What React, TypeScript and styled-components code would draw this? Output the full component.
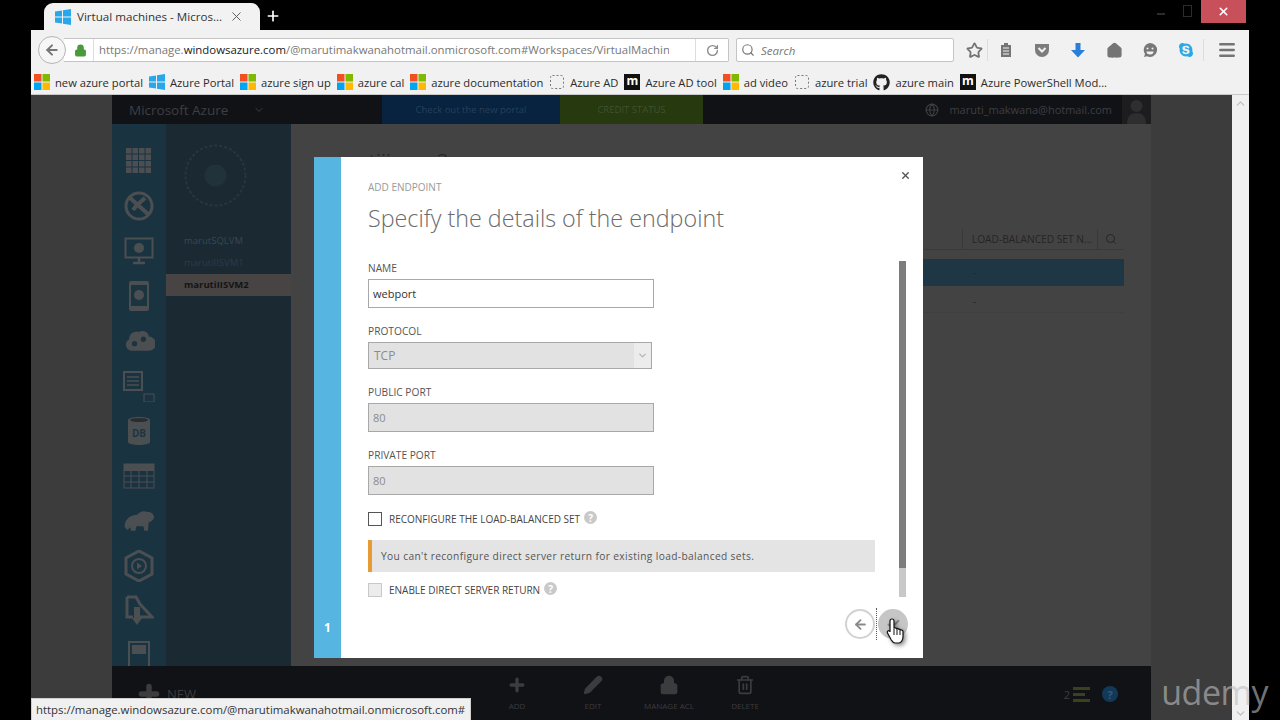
import React from 'react';
import styled, { createGlobalStyle } from 'styled-components';
import { ArrowLeft, Check, ChevronDown, ChevronUp, RotateCw, Search, Star, Home, Menu, X, Plus, Globe, Lock, Trash2, Pencil } from 'lucide-react';
import { FaGithub, FaSkype } from 'react-icons/fa';

const GlobalStyle = createGlobalStyle`
  html, body {
    margin: 0;
    padding: 0;
    background: #000;
    overflow: hidden;
  }
  * { box-sizing: border-box; }
`;

const Screen = styled.div`
  position: relative;
  width: 1280px;
  height: 720px;
  background: #000;
  overflow: hidden;
  font-family: 'Open Sans', 'Noto Sans', sans-serif;
`;

const TitleBar = styled.div`
  height: 30px;
  padding: 3px 31px 0 44px;
  display: flex;
  align-items: flex-start;
`;

const Tab = styled.div`
  width: 216px;
  height: 27px;
  background: #f2f2f2;
  border-radius: 9px 9px 0 0;
  display: flex;
  align-items: center;
  padding: 0 16px 0 11px;
  font-size: 11.6px;
  color: #333;
  gap: 6px;
  svg {
    flex-shrink: 0;
  }
`;

const TabTitle = styled.span`
  flex: 1;
  white-space: nowrap;
`;

const NewTab = styled.div`
  margin: 5px 0 0 5px;
  color: #fff;
  display: flex;
`;

const WindowControls = styled.div`
  margin-left: auto;
  margin-right: 3px;
  margin-top: -3px;
  display: flex;
  align-items: flex-start;
  gap: 18px;
`;

const CloseButton = styled.div`
  width: 45px;
  height: 23px;
  margin-left: -9px;
  background: #c7505a;
  color: #fff;
  display: flex;
  align-items: center;
  justify-content: center;
`;

const RestoreIcon = styled.div`
  width: 9px;
  height: 12px;
  margin-top: 5px;
  border: 1px solid #2c2c2c;
`;

const MinimizeIcon = styled.div`
  width: 8px;
  height: 2px;
  margin-top: 13px;
  background: #2c2c2c;
`;

const BrowserWindow = styled.div`
  margin: 0 31px;
  height: 690px;
  display: flex;
  flex-direction: column;
`;

const NavBar = styled.div`
  height: 40px;
  background: #f1f1f1;
  display: flex;
  align-items: center;
  flex-shrink: 0;
`;

const BackButton = styled.div`
  width: 28px;
  height: 28px;
  margin-left: 7px;
  border-radius: 50%;
  background: #f6f6f6;
  border: 1px solid #b5b5b5;
  color: #777;
  display: flex;
  align-items: center;
  justify-content: center;
  flex-shrink: 0;
  z-index: 1;
`;

const UrlBox = styled.div`
  width: 665px;
  height: 24px;
  margin-left: -2px;
  background: #fff;
  border: 1px solid #c4c4c4;
  border-left: none;
  border-radius: 0 2px 2px 0;
  display: flex;
  align-items: center;
  padding-left: 10px;
  font-size: 11.4px;
  color: #777;
  white-space: nowrap;
  overflow: hidden;
  flex-shrink: 0;
`;

const UrlText = styled.div`
  width: 576px;
  margin-left: 6px;
  padding-left: 5px;
  border-left: 1px solid #ddd;
  overflow: hidden;
  line-height: 22px;
  flex-shrink: 0;
`;

const UrlHost = styled.span`
  color: #1a1a1a;
`;

const Reload = styled.div`
  margin-left: 26px;
  height: 100%;
  width: 33px;
  border-left: 1px solid #ddd;
  color: #8a8a8a;
  display: flex;
  align-items: center;
  justify-content: center;
  flex-shrink: 0;
`;

const SearchBox = styled.div`
  width: 218px;
  height: 24px;
  margin-left: 7px;
  background: #fff;
  border: 1px solid #c4c4c4;
  border-radius: 2px;
  display: flex;
  align-items: center;
  gap: 6px;
  padding-left: 4px;
  font-size: 11.5px;
  font-style: italic;
  color: #777;
  flex-shrink: 0;
`;

const ToolIcons = styled.div`
  margin-left: 7px;
  display: flex;
  align-items: center;
  color: #747474;
  flex: 1;
`;

const ToolSlot = styled.div<{ $w: number; $sep?: boolean }>`
  width: ${(p) => p.$w}px;
  height: 22px;
  display: flex;
  align-items: center;
  justify-content: center;
  border-right: ${(p) => (p.$sep ? '1px solid #ddd' : 'none')};
`;

const BookmarkBar = styled.div`
  height: 25px;
  background: #f1f1f1;
  border-bottom: 1px solid #c9c9c9;
  display: flex;
  align-items: center;
  padding-left: 3px;
  font-size: 11.2px;
  color: #2b2b2b;
  flex-shrink: 0;
  white-space: nowrap;
`;

const Bookmark = styled.div`
  display: flex;
  align-items: center;
  gap: 5px;
  margin-right: 6px;
`;

const Viewport = styled.div`
  position: relative;
  flex: 1;
  display: flex;
  background: #3c3c3c;
  overflow: hidden;
`;

const Page = styled.div`
  flex: 1;
  padding: 0 0 0 81px;
  display: flex;
`;

const Scrollbar = styled.div`
  width: 17px;
  background: #f0f0f0;
  color: #bbb;
  display: flex;
  flex-direction: column;
  justify-content: space-between;
  align-items: center;
  padding: 2px 0 0;
`;

const Portal = styled.div`
  width: 1039px;
  display: flex;
  flex-direction: column;
`;

const PortalTop = styled.div`
  height: 29px;
  background: #111216;
  display: flex;
  align-items: stretch;
  flex-shrink: 0;
`;

const PortalBrand = styled.div`
  width: 270px;
  display: flex;
  align-items: center;
  padding-left: 17px;
  font-size: 13.5px;
  color: #3d3f42;
  gap: 25px;
`;

const Banner = styled.div<{ $bg: string; $w: number }>`
  width: ${(p) => p.$w}px;
  background: ${(p) => p.$bg};
  color: rgba(255, 255, 255, 0.14);
  font-size: 9.5px;
  display: flex;
  align-items: center;
  justify-content: center;
`;

const UserInfo = styled.div`
  margin-left: auto;
  display: flex;
  align-items: center;
  color: #3e3f42;
  font-size: 11px;
  gap: 10px;
`;

const Avatar = styled.div`
  width: 29px;
  height: 29px;
  background: #1d1d1f;
  display: flex;
  align-items: flex-end;
  justify-content: center;
  color: #333;
`;

const PortalBody = styled.div`
  flex: 1;
  display: flex;
  min-height: 0;
`;

const IconRail = styled.div`
  width: 54px;
  background: #1a3340;
  display: flex;
  flex-direction: column;
  align-items: center;
  gap: 11px;
  padding-top: 20px;
  color: #4c4f52;
  overflow: hidden;
`;

const RailIcon = styled.div`
  width: 32px;
  height: 34px;
  flex-shrink: 0;
  display: flex;
  align-items: center;
  justify-content: center;
`;

const Sidebar = styled.div`
  width: 125px;
  background: #1a2932;
  padding-top: 19px;
  display: flex;
  flex-direction: column;
  font-size: 9.5px;
  color: #384852;
`;

const SideRing = styled.svg`
  margin: 0 0 22px 17px;
  flex-shrink: 0;
`;

const SideItem = styled.div<{ $active?: boolean; $dim?: boolean }>`
  height: 22px;
  line-height: 22px;
  padding-left: 18px;
  background: ${(p) => (p.$active ? '#494444' : 'transparent')};
  color: ${(p) => (p.$active ? '#141414' : p.$dim ? '#2c3c46' : '#384852')};
  font-weight: ${(p) => (p.$active ? 700 : 400)};
`;

const Content = styled.div`
  flex: 1;
  display: flex;
  flex-direction: column;
  background: #434343;
  padding: 24px 27px 0 25px;
  color: #252525;
  font-size: 10.2px;
`;

const PageTitle = styled.div`
  height: 26px;
  line-height: 26px;
  font-size: 22px;
  font-weight: 300;
  color: #222;
`;

const TableHead = styled.div`
  height: 22px;
  margin-top: 54px;
  margin-bottom: 9px;
  display: flex;
  justify-content: flex-end;
  align-items: center;
  border-bottom: 1px solid #3a3a3a;
`;

const HeadCell = styled.div`
  height: 20px;
  line-height: 20px;
  padding: 0 5px 0 9px;
  border-left: 1px solid #383838;
`;

const HeadSearch = styled.div`
  width: 27px;
  height: 20px;
  border-left: 1px solid #383838;
  display: flex;
  align-items: center;
  justify-content: center;
`;

const SelectedRow = styled.div`
  height: 27px;
  padding-left: 657px;
  line-height: 27px;
  background: #1f3745;
`;

const RowDash = styled.div`
  height: 27px;
  line-height: 30px;
  padding-left: 657px;
  border-bottom: 1px solid #3f3f3f;
`;

const CommandBar = styled.div`
  position: absolute;
  left: 81px;
  bottom: 0;
  width: 1039px;
  height: 54px;
  background: #111216;
  color: #3c3c3e;
  font-size: 8px;
  display: flex;
  padding: 9px 0 0 385px;
  gap: 36px;
`;

const Command = styled.div`
  width: 40px;
  display: flex;
  flex-direction: column;
  align-items: center;
  gap: 5px;
  white-space: nowrap;
`;

const NewButton = styled.div`
  position: absolute;
  left: 24px;
  top: 15px;
  display: flex;
  align-items: center;
  gap: 5px;
  font-size: 13px;
  line-height: 14px;
`;

const CommandTray = styled.div`
  position: absolute;
  right: 33px;
  top: 20px;
  display: flex;
  align-items: center;
  gap: 12px;
  font-size: 11px;
`;

const TrayBars = styled.div`
  display: flex;
  flex-direction: column;
  gap: 3px;
  margin-left: -9px;
`;

const TrayBar = styled.div<{ $w: number }>`
  width: ${(p) => p.$w}px;
  height: 3px;
  background: #39421f;
`;

const HelpDot = styled.div`
  width: 16px;
  height: 16px;
  border-radius: 50%;
  background: #123a58;
  color: #33587a;
  font-weight: 700;
  display: flex;
  align-items: center;
  justify-content: center;
`;

/* dialog sits over the dimmed portal */
const Dialog = styled.div`
  position: absolute;
  left: 283px;
  top: 62px;
  width: 609px;
  height: 501px;
  background: #fff;
  display: flex;
  color: #555;
`;

const StepRail = styled.div`
  width: 27px;
  background: #57b5e1;
  color: #fff;
  font-size: 12px;
  font-weight: 700;
  display: flex;
  align-items: flex-end;
  justify-content: center;
  padding-bottom: 22px;
`;

const DialogBody = styled.div`
  position: relative;
  flex: 1;
  padding: 23px 0 0 27px;
`;

const Eyebrow = styled.div`
  font-size: 10px;
  line-height: 14px;
  color: #999;
`;

const Heading = styled.h1`
  margin: 8px 0 0;
  font-size: 23.3px;
  line-height: 32px;
  font-weight: 300;
  color: #6b6b6b;
`;

const Form = styled.div`
  margin-top: 27px;
  width: 507px;
`;

const Field = styled.div`
  margin-bottom: 16px;
`;

const Label = styled.div`
  font-size: 10.2px;
  line-height: 14px;
  margin-bottom: 4px;
  color: #555;
`;

const TextInput = styled.div<{ $disabled?: boolean }>`
  width: 286px;
  height: 29px;
  padding-left: 4px;
  display: flex;
  align-items: center;
  font-size: 11px;
  border: 1px solid #a8a8a8;
  background: ${(p) => (p.$disabled ? '#e2e2e2' : '#fff')};
  color: ${(p) => (p.$disabled ? '#8c8c8c' : '#333')};
`;

const SelectBox = styled.div`
  width: 284px;
  height: 27px;
  padding-left: 5px;
  display: flex;
  align-items: center;
  justify-content: space-between;
  font-size: 12px;
  background: #e2e2e2;
  border: 1px solid #a8a8a8;
  color: #8c8c8c;
`;

const SelectArrow = styled.div`
  width: 17px;
  height: 100%;
  background: #ececec;
  color: #b5b5b5;
  display: flex;
  align-items: center;
  justify-content: center;
`;

const CheckRow = styled.div`
  display: flex;
  align-items: center;
  font-size: 10px;
  height: 16px;
  color: #444;
`;

const CheckBox = styled.div<{ $disabled?: boolean }>`
  width: 14px;
  height: 14px;
  margin-right: 7px;
  border: 1px solid ${(p) => (p.$disabled ? '#c8c8c8' : '#555')};
  background: ${(p) => (p.$disabled ? '#ececec' : '#fff')};
`;

const HintIcon = styled.div`
  width: 13px;
  height: 13px;
  margin: -3px 0 0 4px;
  border-radius: 50%;
  background: #c9c9c9;
  color: #fff;
  font-size: 10px;
  font-weight: 700;
  display: flex;
  align-items: center;
  justify-content: center;
`;

const Notice = styled.div`
  width: 507px;
  height: 32px;
  margin: 13px 0 10px;
  padding-left: 9px;
  display: flex;
  align-items: center;
  font-size: 10.2px;
  letter-spacing: 0.37px;
  white-space: nowrap;
  background: #e4e4e4;
  border-left: 4px solid #e89b35;
  color: #555;
`;

const CloseX = styled.div`
  position: absolute;
  right: 12px;
  top: 13px;
  color: #555;
  display: flex;
`;

const FormScroll = styled.div`
  position: absolute;
  left: 558px;
  top: 104px;
  width: 7px;
  height: 336px;
  background: #c8c8c8;
`;

const ScrollThumb = styled.div`
  height: 307px;
  background: #7d7d7d;
`;

const NavButtons = styled.div`
  position: absolute;
  right: 15px;
  bottom: 18px;
  display: flex;
  align-items: center;
`;

const RoundButton = styled.div<{ $active?: boolean }>`
  width: 30px;
  height: 30px;
  border-radius: 50%;
  border: 2px solid ${(p) => (p.$active ? '#c6c6c6' : '#d2d2d2')};
  background: ${(p) => (p.$active ? '#c6c6c6' : '#fff')};
  color: #8a8a8a;
  display: flex;
  align-items: center;
  justify-content: center;
`;

const DotDivider = styled.div`
  width: 1px;
  height: 32px;
  margin: 0 1px;
  border-left: 1px dotted #555;
`;

const Pointer = styled.svg`
  position: absolute;
  left: 855px;
  top: 522px;
  filter: drop-shadow(2px 2px 2px rgba(0, 0, 0, 0.45));
`;

const StatusTip = styled.div`
  position: absolute;
  left: 31px;
  bottom: 0;
  width: 440px;
  height: 22px;
  padding: 0 4px;
  background: #f0f0f0;
  border: 1px solid #cfcfcf;
  border-bottom: none;
  font-size: 11.4px;
  line-height: 21px;
  color: #333;
  white-space: nowrap;
`;

const Watermark = styled.div`
  position: absolute;
  right: 12px;
  bottom: 8px;
  font-family: 'Open Sans', sans-serif;
  font-size: 34px;
  line-height: 40px;
  letter-spacing: -0.5px;
  color: rgba(190, 190, 190, 0.62);
`;

const WinLogo: React.FC<{ kind: 'blue' | 'multi' }> = ({ kind }) => {
  if (kind === 'blue') {
    return (
      <svg width="16" height="16" viewBox="0 0 16 16" fill="#28a8ea">
        <polygon points="0,2.500 7,1.500 7,7.500 0,7.500" />
        <polygon points="8,1.300 16,0 16,7.500 8,7.500" />
        <polygon points="0,8.500 7,8.500 7,14.500 0,13.500" />
        <polygon points="8,8.500 16,8.500 16,16 8,14.700" />
      </svg>
    );
  }
  return (
    <svg width="16" height="16" viewBox="0 0 16 16">
      <rect x="0" y="0" width="7.500" height="7.500" fill="#f25022" />
      <rect x="8.500" y="0" width="7.500" height="7.500" fill="#7fba00" />
      <rect x="0" y="8.500" width="7.500" height="7.500" fill="#00a4ef" />
      <rect x="8.500" y="8.500" width="7.500" height="7.500" fill="#ffb900" />
    </svg>
  );
};

const BlankFav = () => (
  <svg width="16" height="16" viewBox="0 0 16 16">
    <rect x="1.500" y="1.500" width="13" height="13" rx="2" fill="none" stroke="#777" strokeDasharray="2 2" />
  </svg>
);

const MFav = styled.div`
  width: 16px;
  height: 16px;
  background: #111;
  color: #fff;
  font-size: 12px;
  font-weight: 700;
  line-height: 14px;
  text-align: center;
`;

const bookmarks: { label: string; icon: React.ReactNode }[] = [
  { label: 'new azure portal', icon: <WinLogo kind="multi" /> },
  { label: 'Azure Portal', icon: <WinLogo kind="blue" /> },
  { label: 'azure sign up', icon: <WinLogo kind="multi" /> },
  { label: 'azure cal', icon: <WinLogo kind="multi" /> },
  { label: 'azure documentation', icon: <WinLogo kind="multi" /> },
  { label: 'Azure AD', icon: <BlankFav /> },
  { label: 'Azure AD tool', icon: <MFav>m</MFav> },
  { label: 'ad video', icon: <WinLogo kind="multi" /> },
  { label: 'azure trial', icon: <BlankFav /> },
  { label: 'azure main', icon: <FaGithub size={17} color="#222" /> },
  { label: 'Azure PowerShell Mod...', icon: <MFav>m</MFav> },
];

const Clipboard = () => (
  <svg width="16" height="16" viewBox="0 0 16 16" fill="#747474">
    <path d="M6 1h4v2h3v12H3V3h3z" />
    <path d="M5 6h6M5 9h6M5 12h6" stroke="#f1f1f1" />
  </svg>
);

const Pocket = () => (
  <svg width="16" height="16" viewBox="0 0 16 16">
    <path d="M1 2h14v6a7 7 0 0 1-14 0z" fill="#7c7c7c" />
    <path d="M4.500 6 8 9.500 11.500 6" stroke="#f1f1f1" strokeWidth="2" fill="none" />
  </svg>
);

const Download = () => (
  <svg width="14" height="16" viewBox="0 0 14 16">
    <path d="M4.500 1h5v7H14l-7 7.500L0 8h4.500z" fill="#2a7fd9" />
  </svg>
);

const Smiley = () => (
  <svg width="16" height="16" viewBox="0 0 16 16">
    <path d="M8 1a7 7 0 1 1-3 13.300L2 15l1-3A7 7 0 0 1 8 1z" fill="#777" />
    <circle cx="5.500" cy="6.500" r="1" fill="#f1f1f1" />
    <circle cx="10.500" cy="6.500" r="1" fill="#f1f1f1" />
    <path d="M4.500 9.500h7a3.500 3 0 0 1-7 0z" fill="#f1f1f1" />
  </svg>
);

const railIcons: React.ReactNode[] = [
  <svg width="28" height="28" viewBox="0 0 28 28" key="grid">
    {[0, 1, 2, 3].flatMap((r) =>
      [0, 1, 2, 3].map((c) => <rect key={`${r}${c}`} x={1 + c * 6.5} y={1 + r * 6.5} width="5.500" height="5.500" fill="currentColor" />),
    )}
  </svg>,
  <svg width="32" height="32" viewBox="0 0 32 32" key="globe">
    <circle cx="16" cy="16" r="13" fill="none" stroke="currentColor" strokeWidth="3" />
    <path d="M6 7l20 18M10 20c4-6 8-8 12-12" stroke="currentColor" strokeWidth="4" fill="none" />
  </svg>,
  <svg width="30" height="28" viewBox="0 0 30 28" key="vm">
    <rect x="1.500" y="1.500" width="27" height="19" fill="none" stroke="currentColor" strokeWidth="2" />
    <circle cx="15" cy="11" r="5" fill="currentColor" />
    <path d="M9 26h12M15 21v5" stroke="currentColor" strokeWidth="2.500" />
  </svg>,
  <svg width="22" height="32" viewBox="0 0 22 32" key="mobile">
    <rect x="1" y="1" width="20" height="30" rx="2" fill="currentColor" />
    <rect x="3" y="5" width="16" height="21" fill="#1b3540" />
    <circle cx="11" cy="15" r="5" fill="currentColor" />
  </svg>,
  <svg width="36" height="30" viewBox="0 0 36 30" key="cloud">
    <path d="M9 26a7 7 0 0 1-2-13 8 8 0 0 1 11-8 7 7 0 0 1 11 5 8 8 0 0 1 0 16z" fill="currentColor" />
    <circle cx="13" cy="18" r="3" fill="#1b3540" />
    <circle cx="23" cy="13" r="3" fill="#1b3540" />
  </svg>,
  <svg width="32" height="32" viewBox="0 0 32 32" key="list">
    <rect x="1" y="2" width="18" height="18" fill="none" stroke="currentColor" strokeWidth="2" />
    <path d="M4 7h12M4 11h12M4 15h12" stroke="currentColor" strokeWidth="1.500" />
    <rect x="21" y="24" width="10" height="8" fill="none" stroke="currentColor" />
  </svg>,
  <svg width="24" height="30" viewBox="0 0 24 30" key="db">
    <path d="M1 4c0-4 22-4 22 0v22c0 4-22 4-22 0z" fill="currentColor" />
    <ellipse cx="12" cy="4" rx="9" ry="2" fill="#2a2d30" />
    <text x="12" y="21" fontSize="10" fontWeight="700" textAnchor="middle" fill="#1b3540">DB</text>
  </svg>,
  <svg width="32" height="26" viewBox="0 0 32 26" key="table">
    <rect x="1" y="1" width="30" height="24" fill="none" stroke="currentColor" />
    <rect x="1" y="1" width="30" height="7" fill="currentColor" />
    <path d="M1 13h30M1 19h30M8 8v17M16 8v17M24 8v17" stroke="currentColor" />
  </svg>,
  <svg width="36" height="30" viewBox="0 0 36 30" key="hadoop">
    <path d="M2 22c-1-8 6-14 14-14 3-4 8-5 11-3 4-1 8 2 8 6-1 3-3 5-6 5l-1 10h-4l-1-5h-8l-1 5H9l-1-4-3 3z" fill="currentColor" />
  </svg>,
  <svg width="30" height="32" viewBox="0 0 30 32" key="media">
    <path d="M15 1l13 7v16l-13 7-13-7V8z" fill="none" stroke="currentColor" strokeWidth="3" />
    <circle cx="15" cy="16" r="7" fill="none" stroke="currentColor" strokeWidth="2" />
    <path d="M13 12.500v7l5-3.500z" fill="currentColor" />
  </svg>,
  <svg width="30" height="32" viewBox="0 0 30 32" key="deploy">
    <path d="M3 2h9l4 7 12 13H16M3 2v20h6" fill="none" stroke="currentColor" strokeWidth="3" />
    <path d="M10 12h6v11h2l-5 7-5-7h2z" fill="currentColor" />
  </svg>,
  <svg width="22" height="30" viewBox="0 0 22 30" key="report">
    <rect x="1" y="1" width="20" height="28" fill="none" stroke="currentColor" strokeWidth="2" />
    <rect x="4" y="4" width="14" height="9" fill="currentColor" />
  </svg>,
];

const Cursor = () => (
  <Pointer width="20" height="27" viewBox="0 0 20 27">
    <path
      d="M6 2c1.200 0 2 .8 2 2v7l1-.2c.8-.1 1.300.3 1.600.8.8-.3 1.600 0 2 .7.8-.3 1.600 0 2 .6 1.200-.3 2.400.5 2.400 1.800V20c0 3-2 6-4 6H9c-2 0-3-2-4-3.500L1.500 16c-.8-1.500 1-3 2.400-1.800L4 15V4c0-1.200.8-2 2-2z"
      fill="#fff"
      stroke="#111"
      strokeWidth="1.200"
    />
    <path d="M8 12v6M11 12v6M14 13v5" stroke="#111" strokeWidth="1" />
  </Pointer>
);

const App: React.FC = () => {
  return (
    <Screen>
      <GlobalStyle />
      <TitleBar>
        <Tab>
          <WinLogo kind="blue" />
          <TabTitle>Virtual machines - Micros...</TabTitle>
          <X size={15} color="#555" strokeWidth={1.5} />
        </Tab>
        <NewTab>
          <Plus size={16} strokeWidth={2.5} />
        </NewTab>
        <WindowControls>
          <MinimizeIcon />
          <RestoreIcon />
          <CloseButton>
            <X size={13} strokeWidth={3} />
          </CloseButton>
        </WindowControls>
      </TitleBar>

      <BrowserWindow>
        <NavBar>
          <BackButton>
            <ArrowLeft size={16} strokeWidth={3} />
          </BackButton>
          <UrlBox>
            <Lock size={13} color="#4b9a3c" fill="#4b9a3c" />
            <UrlText>
              https://manage.<UrlHost>windowsazure.com</UrlHost>/@marutimakwanahotmail.onmicrosoft.com#Workspaces/VirtualMachines
            </UrlText>
            <Reload>
              <RotateCw size={13} strokeWidth={2.5} />
            </Reload>
          </UrlBox>
          <SearchBox>
            <Search size={14} color="#777" />
            Search
          </SearchBox>
          <ToolIcons>
            <ToolSlot $w={27} $sep>
              <Star size={17} strokeWidth={2.5} />
            </ToolSlot>
            <ToolSlot $w={36}><Clipboard /></ToolSlot>
            <ToolSlot $w={36}><Pocket /></ToolSlot>
            <ToolSlot $w={36}><Download /></ToolSlot>
            <ToolSlot $w={36}><Home size={17} fill="#747474" /></ToolSlot>
            <ToolSlot $w={36}><Smiley /></ToolSlot>
            <ToolSlot $w={36} $sep><FaSkype size={16} color="#2aa8e8" /></ToolSlot>
            <ToolSlot $w={45}><Menu size={20} strokeWidth={3} /></ToolSlot>
          </ToolIcons>
        </NavBar>

        <BookmarkBar>
          {bookmarks.map((b) => (
            <Bookmark key={b.label}>
              {b.icon}
              <span>{b.label}</span>
            </Bookmark>
          ))}
        </BookmarkBar>

        <Viewport>
          <Page>
            <Portal>
              <PortalTop>
                <PortalBrand>
                  Microsoft Azure
                  <ChevronDown size={12} />
                </PortalBrand>
                <Banner $bg="#072340" $w={178}>Check out the new portal</Banner>
                <Banner $bg="#26390f" $w={143}>CREDIT STATUS</Banner>
                <UserInfo>
                  <Globe size={14} />
                  maruti_makwana@hotmail.com
                  <Avatar>
                    <svg width="21" height="26" viewBox="0 0 21 26" fill="#2e2e30">
                      <circle cx="10.500" cy="8" r="6" />
                      <path d="M1 26c0-8 4-11 9.500-11S20 18 20 26z" />
                    </svg>
                  </Avatar>
                </UserInfo>
              </PortalTop>
              <PortalBody>
                <IconRail>
                  {railIcons.map((icon, i) => (
                    <RailIcon key={i}>{icon}</RailIcon>
                  ))}
                </IconRail>
                <Sidebar>
                  <SideRing width="65" height="65" viewBox="0 0 65 65">
                    <circle cx="32.500" cy="32.500" r="30" fill="none" stroke="#24383f" strokeWidth="2" strokeDasharray="3 2" />
                    <circle cx="32.500" cy="32.500" r="11" fill="#22323a" />
                  </SideRing>
                  <SideItem>marutSQLVM</SideItem>
                  <SideItem $dim>marutiIISVM1</SideItem>
                  <SideItem $active>marutiIISVM2</SideItem>
                </Sidebar>
                <Content>
                  <PageTitle>marutiiisvm 2</PageTitle>
                  <TableHead>
                    <HeadCell>LOAD-BALANCED SET N...</HeadCell>
                    <HeadSearch>
                      <Search size={12} />
                    </HeadSearch>
                  </TableHead>
                  <SelectedRow>-</SelectedRow>
                  <RowDash>-</RowDash>
                </Content>
              </PortalBody>
            </Portal>
          </Page>
          <Scrollbar>
            <ChevronUp size={13} />
            <ChevronDown size={13} />
          </Scrollbar>

          <CommandBar>
            <NewButton>
              <Plus size={26} strokeWidth={5} />
              NEW
            </NewButton>
            <Command><Plus size={20} strokeWidth={4} />ADD</Command>
            <Command><Pencil size={20} fill="currentColor" />EDIT</Command>
            <Command><Lock size={20} fill="currentColor" />MANAGE ACL</Command>
            <Command><Trash2 size={20} />DELETE</Command>
            <CommandTray>
              2
              <TrayBars>
                <TrayBar $w={17} />
                <TrayBar $w={12} />
                <TrayBar $w={17} />
              </TrayBars>
              <HelpDot>?</HelpDot>
            </CommandTray>
          </CommandBar>

          <Dialog>
            <StepRail>1</StepRail>
            <DialogBody>
              <Eyebrow>ADD ENDPOINT</Eyebrow>
              <Heading>Specify the details of the endpoint</Heading>
              <Form>
                <Field>
                  <Label>NAME</Label>
                  <TextInput>webport</TextInput>
                </Field>
                <Field>
                  <Label>PROTOCOL</Label>
                  <SelectBox>
                    TCP
                    <SelectArrow>
                      <ChevronDown size={11} strokeWidth={3} />
                    </SelectArrow>
                  </SelectBox>
                </Field>
                <Field>
                  <Label>PUBLIC PORT</Label>
                  <TextInput $disabled>80</TextInput>
                </Field>
                <Field>
                  <Label>PRIVATE PORT</Label>
                  <TextInput $disabled>80</TextInput>
                </Field>
                <CheckRow>
                  <CheckBox />
                  RECONFIGURE THE LOAD-BALANCED SET
                  <HintIcon>?</HintIcon>
                </CheckRow>
                <Notice>You can't reconfigure direct server return for existing load-balanced sets.</Notice>
                <CheckRow>
                  <CheckBox $disabled />
                  ENABLE DIRECT SERVER RETURN
                  <HintIcon>?</HintIcon>
                </CheckRow>
              </Form>
              <CloseX>
                <X size={11} strokeWidth={3} />
              </CloseX>
              <FormScroll>
                <ScrollThumb />
              </FormScroll>
              <NavButtons>
                <RoundButton>
                  <ArrowLeft size={15} strokeWidth={3} />
                </RoundButton>
                <DotDivider />
                <RoundButton $active>
                  <Check size={15} strokeWidth={3} />
                </RoundButton>
              </NavButtons>
            </DialogBody>
          </Dialog>

          <Cursor />
        </Viewport>
      </BrowserWindow>

      <StatusTip>https://manage.windowsazure.com/@marutimakwanahotmail.onmicrosoft.com#</StatusTip>
      <Watermark>udemy</Watermark>
    </Screen>
  );
};

export default App;
